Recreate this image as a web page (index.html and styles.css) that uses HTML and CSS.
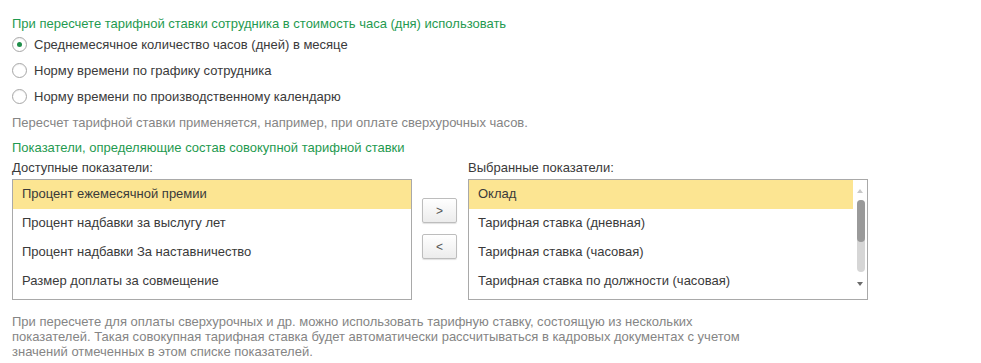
FILE: index.html
```html
<!DOCTYPE html>
<html lang="ru">
<head>
<meta charset="utf-8">
<link rel="stylesheet" href="styles.css">
</head>
<body>
<div class="page">
  <div class="title">При пересчете тарифной ставки сотрудника в стоимость часа (дня) использовать</div>
  <div class="radios">
    <div class="radio-row"><span class="radio checked"></span><span>Среднемесячное количество часов (дней) в месяце</span></div>
    <div class="radio-row"><span class="radio"></span><span>Норму времени по графику сотрудника</span></div>
    <div class="radio-row"><span class="radio"></span><span>Норму времени по производственному календарю</span></div>
  </div>
  <div class="note">Пересчет тарифной ставки применяется, например, при оплате сверхурочных часов.</div>
  <div class="title heading">Показатели, определяющие состав совокупной тарифной ставки</div>
  <div class="lists">
    <div class="label">Доступные показатели:</div>
    <div></div>
    <div class="label">Выбранные показатели:</div>
    <div class="listbox">
      <div class="item selected">Процент ежемесячной премии</div>
      <div class="item">Процент надбавки за выслугу лет</div>
      <div class="item">Процент надбавки За наставничество</div>
      <div class="item">Размер доплаты за совмещение</div>
    </div>
    <div class="buttons">
      <div class="btn">&gt;</div>
      <div class="btn">&lt;</div>
    </div>
    <div class="listbox with-scroll">
      <div class="items">
        <div class="item selected">Оклад</div>
        <div class="item">Тарифная ставка (дневная)</div>
        <div class="item">Тарифная ставка (часовая)</div>
        <div class="item">Тарифная ставка по должности (часовая)</div>
      </div>
      <div class="scrollbar">
        <div class="arrow up"></div>
        <div class="track"><div class="thumb"></div></div>
        <div class="arrow down"></div>
      </div>
    </div>
  </div>
  <div class="footnote">При пересчете для оплаты сверхурочных и др. можно использовать тарифную ставку, состоящую из нескольких показателей. Такая совокупная тарифная ставка будет автоматически рассчитываться в кадровых документах с учетом значений отмеченных в этом списке показателей.</div>
</div>
</body>
</html>
```
FILE: styles.css
```css
html, body {
  margin: 0;
  padding: 0;
  background: #ffffff;
}
body {
  font-family: "Liberation Sans", Arial, sans-serif;
  font-size: 13px;
  color: #3a3a3a;
}
.page {
  padding: 16px 0 0 12px;
  width: 969px;
}
.title {
  color: #1f9a50;
  line-height: 15px;
  height: 15px;
  white-space: nowrap;
}
.radios {
  margin-top: 0;
}
.radio-row {
  display: flex;
  align-items: center;
  height: 26px;
  white-space: nowrap;
}
.radio {
  box-sizing: border-box;
  width: 15px;
  height: 15px;
  border: 1px solid #a6a6a6;
  border-radius: 50%;
  background: #ffffff;
  margin-right: 7px;
  display: flex;
  align-items: center;
  justify-content: center;
  box-shadow: inset 0 1px 1px rgba(0,0,0,0.06);
}
.radio.checked::after {
  content: "";
  width: 5px;
  height: 5px;
  border-radius: 50%;
  background: #1f8f4a;
}
.note {
  color: #858585;
  line-height: 15px;
  margin-top: 6px;
  white-space: nowrap;
}
.heading {
  margin-top: 10px;
}
.lists {
  display: grid;
  grid-template-columns: 400px 56px 400px;
  margin-top: 5px;
}
.label {
  line-height: 15px;
  height: 15px;
  margin-bottom: 4px;
  white-space: nowrap;
}
.listbox {
  box-sizing: border-box;
  height: 121px;
  border: 1px solid #a9a9a9;
  overflow: hidden;
}
.item {
  height: 29px;
  line-height: 28px;
  padding-left: 9px;
  white-space: nowrap;
}
.item.selected {
  background: #fce592;
}
.buttons {
  display: flex;
  flex-direction: column;
  gap: 11px;
  padding: 19px 0 0 10px;
}
.btn {
  box-sizing: border-box;
  width: 35px;
  height: 25px;
  border: 1px solid #bdbdbd;
  border-radius: 2px;
  background: linear-gradient(#ffffff, #ececec);
  box-shadow: 0 1px 1px rgba(0,0,0,0.12);
  display: flex;
  align-items: center;
  justify-content: center;
  color: #555555;
  font-size: 12px;
}
.with-scroll {
  display: flex;
}
.items {
  flex: 1;
}
.scrollbar {
  width: 14px;
  display: flex;
  flex-direction: column;
  align-items: center;
  padding: 9px 0 5px;
  box-sizing: border-box;
}
.arrow {
  width: 0;
  height: 0;
  border-left: 3px solid transparent;
  border-right: 3px solid transparent;
}
.arrow.up {
  border-bottom: 4px solid #c8c8c8;
}
.arrow.down {
  border-top: 4px solid #6b6b6b;
}
.track {
  width: 8px;
  height: 72px;
  margin: 7px 0 10px;
  background: #d6d6d6;
  border-radius: 4px;
  margin-left: 2px;
}
.thumb {
  height: 42px;
  background: #9a9a9a;
  border-radius: 4px;
}
.footnote {
  color: #858585;
  line-height: 15px;
  width: 740px;
  margin-top: 14px;
}
```
